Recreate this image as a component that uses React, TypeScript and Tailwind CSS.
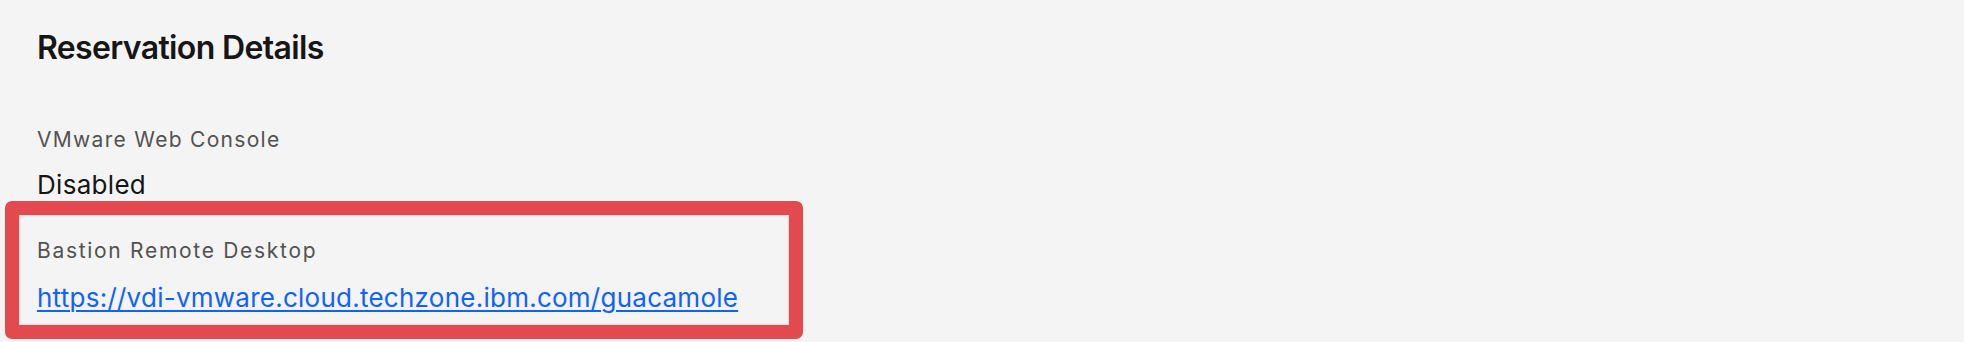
export default function App() {
  return (
    <div className="min-h-[342px] bg-[#f4f4f4] pt-[28px] font-['Inter','Noto_Sans',sans-serif] text-[#161616]">
      <h2 className="pl-[37px] text-[32px] leading-[40px] font-semibold tracking-[-0.65px]">Reservation Details</h2>

      <div className="pl-[37px] mt-[60px] text-[21px] leading-[24px] tracking-[1.3px] text-[#525252]">
        VMware Web Console
      </div>
      <div className="pl-[37px] mt-[17px] text-[26px] leading-[32px] tracking-[0.3px]">Disabled</div>

      <div className="ml-[5px] w-[798px] rounded-[7px] border-[14px] border-[#e34a4f]">
        <div className="border border-[#dcdcdc] shadow-[inset_0_0_2px_rgba(0,0,0,0.08)] px-[17px] pt-[23px] pb-[10px]">
          <div className="text-[21px] leading-[24px] tracking-[1.7px] text-[#525252]">Bastion Remote Desktop</div>
          <a
            href="#"
            className="mt-[19px] block w-fit text-[26px] leading-[32px] tracking-[0.25px] text-[#0f62fe] underline underline-offset-[3px] decoration-[1.5px]"
          >
            https://vdi-vmware.cloud.techzone.ibm.com/guacamole
          </a>
        </div>
      </div>
    </div>
  );
}
